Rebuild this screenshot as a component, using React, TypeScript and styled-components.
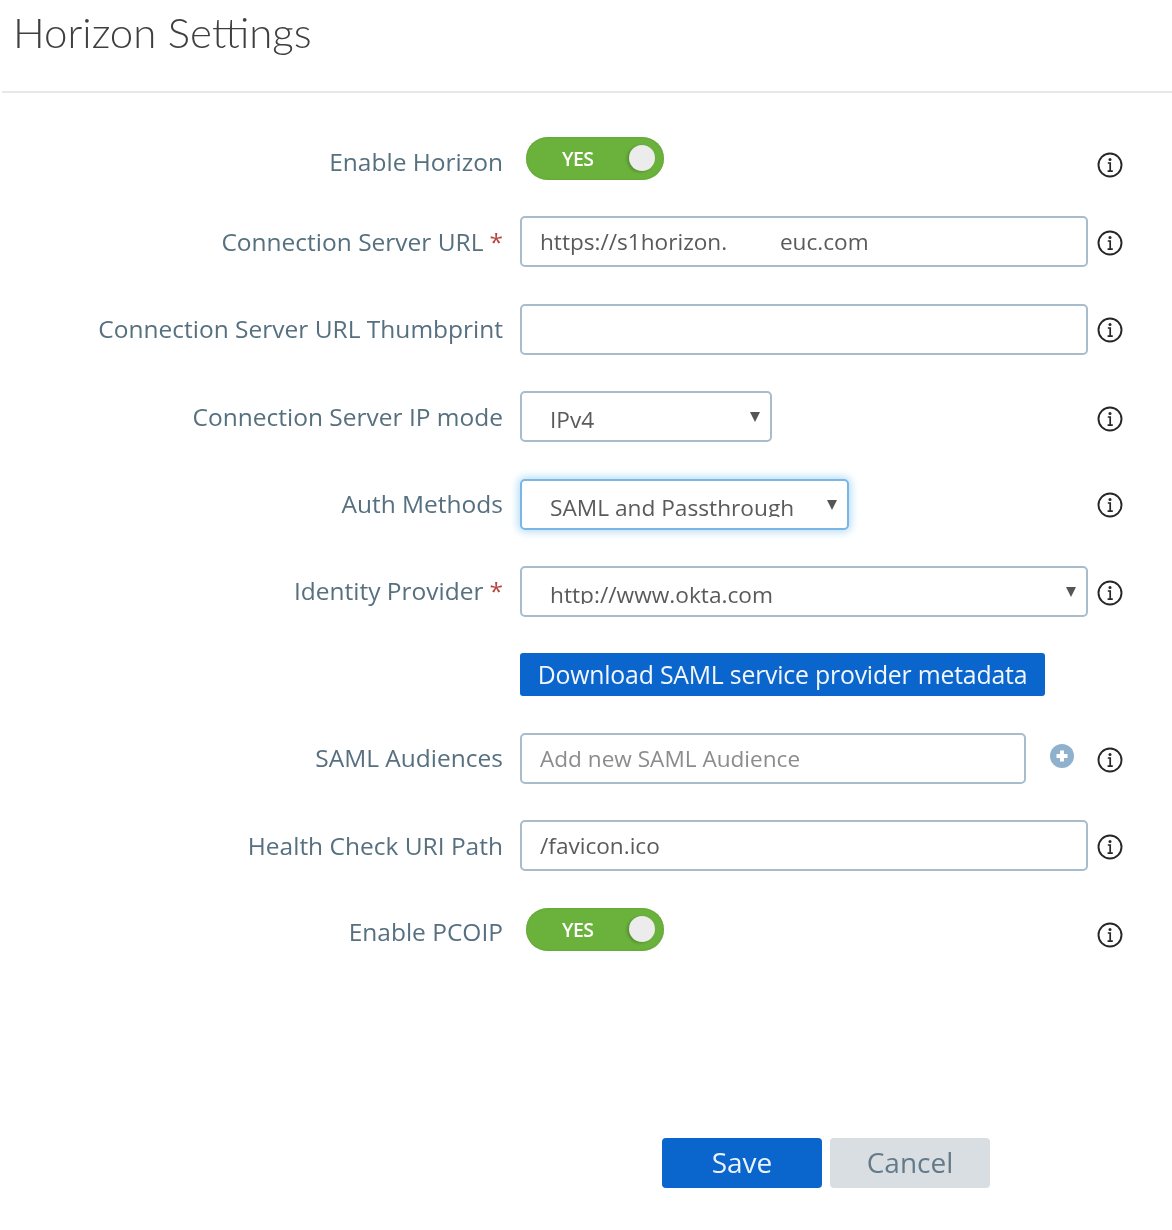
import * as React from "react";
import styled, { createGlobalStyle } from "styled-components";

const GlobalStyle = createGlobalStyle`
  html, body {
    margin: 0;
    padding: 0;
    background: #fff;
    font-family: "Open Sans", "Liberation Sans", sans-serif;
  }
`;

const Page = styled.div`
  width: 1172px;
  height: 1230px;
  overflow: hidden;
  box-sizing: border-box;
  filter: blur(0.5px);
`;

const Header = styled.header`
  height: 93px;
  margin-left: 2px;
  padding: 6px 0 0 11px;
  box-sizing: border-box;
  border-bottom: 2px solid #e8e8e8;
`;

const Title = styled.h1`
  margin: 0;
  font-family: "Lato", sans-serif;
  font-size: 42px;
  line-height: 52px;
  font-weight: 300;
  color: #3f3f3f;
`;

const Form = styled.form`
  display: flex;
  flex-direction: column;
  gap: 36.4px;
  padding-top: 44px;
`;

const Row = styled.div<{ $short?: boolean }>`
  display: grid;
  grid-template-columns: 503px 585px 44px;
  column-gap: 0;
  align-items: center;
  height: ${(p) => (p.$short ? "43px" : "51px")};
`;

const Label = styled.label<{ $drop?: number }>`
  text-align: right;
  font-size: 24.5px;
  line-height: 32px;
  color: #567080;
  white-space: nowrap;
  padding-top: ${(p) => p.$drop ?? 0}px;
`;

const Star = styled.span`
  color: #b5453c;
  margin-left: 6px;
`;

const Field = styled.div`
  display: flex;
  align-items: center;
  padding-left: 17px;
  min-width: 0;
`;

const TextInput = styled.input<{ $width?: number }>`
  width: ${(p) => p.$width ?? 569}px;
  height: 51px;
  box-sizing: border-box;
  padding: 0 18px;
  border: 2px solid #a9bccb;
  border-radius: 5px;
  background: #fff;
  font-family: inherit;
  font-size: 22.6px;
  color: #5a5a5a;
  outline: none;
  &::placeholder {
    color: #8c8c8c;
    opacity: 1;
  }
`;

const SelectBox = styled.div<{ $width: number; $focus?: boolean }>`
  position: relative;
  width: ${(p) => p.$width}px;
  height: 51px;
  box-sizing: border-box;
  padding: 11px 0 0 28px;
  border: 2px solid ${(p) => (p.$focus ? "#79b6e6" : "#a9bccb")};
  border-radius: 5px;
  background: #fff;
  box-shadow: ${(p) => (p.$focus ? "0 0 9px 2px #b5dcf6" : "none")};
`;

const SelectValue = styled.div`
  height: 25px;
  overflow: hidden;
  font-size: 22.7px;
  line-height: 32px;
  color: #5a5a5a;
  white-space: nowrap;
`;

const Caret = styled.span`
  position: absolute;
  top: 19px;
  right: 10px;
  width: 0;
  height: 0;
  border-left: 5px solid transparent;
  border-right: 5px solid transparent;
  border-top: 10px solid #555;
`;

const Toggle = styled.div`
  position: relative;
  width: 138px;
  height: 43px;
  margin-left: 6px;
  border-radius: 22px;
  background: #6ab23c;
  box-shadow: inset 0 0 2px #5a9a30;
`;

const ToggleText = styled.span`
  position: absolute;
  left: 36px;
  top: 9px;
  font-size: 19.5px;
  line-height: 26px;
  letter-spacing: -0.6px;
  font-weight: 600;
  color: #fff;
`;

const Knob = styled.span`
  position: absolute;
  right: 9px;
  top: 8px;
  width: 26px;
  height: 26px;
  border-radius: 50%;
  background: #ececec;
  box-shadow: -2px 1px 3px rgba(0, 0, 0, 0.2);
`;

const IconCell = styled.div<{ $drop?: number }>`
  display: flex;
  justify-content: flex-start;
  padding: ${(p) => p.$drop ?? 2}px 0 0 9px;
`;

const AddButton = styled.span`
  display: flex;
  margin-left: 23px;
  margin-top: -5px;
`;

const DownloadButton = styled.button`
  width: 525px;
  height: 43px;
  padding: 0 0 2px;
  border: 0;
  border-radius: 3px;
  background: #0a65cc;
  color: #f2f7fc;
  font-family: inherit;
  font-size: 24.8px;
  letter-spacing: -0.2px;
  white-space: nowrap;
`;

const Actions = styled.div`
  display: flex;
  gap: 8px;
  margin: 187.4px 0 0 662px;
`;

const ActionButton = styled.button<{ $primary?: boolean }>`
  width: 160px;
  height: 50px;
  padding: 0 0 2px;
  border: 0;
  border-radius: 4px;
  background: ${(p) => (p.$primary ? "#0a65cc" : "#d9dee2")};
  color: ${(p) => (p.$primary ? "#eaf3fc" : "#647a8a")};
  font-family: inherit;
  font-size: 28px;
`;

function InfoIcon() {
  return (
    <svg width="26" height="26" viewBox="0 0 26 26" fill="none">
      <circle cx="13" cy="13" r="11.5" stroke="#262626" strokeWidth="1.9" />
      <circle cx="13" cy="7.6" r="1.5" fill="#262626" />
      <path d="M10.8 11H13.2V18.8M10.6 19.2H15.8" stroke="#262626" strokeWidth="1.7" />
    </svg>
  );
}

function PlusIcon() {
  return (
    <svg width="26" height="26" viewBox="0 0 26 26">
      <circle cx="13" cy="13" r="12" fill="#8fb1cd" />
      <path d="M13 7.5V18.5M7.5 13H18.5" stroke="#fff" strokeWidth="4" />
    </svg>
  );
}

function Switch() {
  return (
    <Toggle>
      <ToggleText>YES</ToggleText>
      <Knob />
    </Toggle>
  );
}

function Select({ value, width, focus }: { value: string; width: number; focus?: boolean }) {
  return (
    <SelectBox $width={width} $focus={focus}>
      <SelectValue>{value}</SelectValue>
      <Caret />
    </SelectBox>
  );
}

export default function App() {
  return (
    <Page>
      <GlobalStyle />
      <Header>
        <Title>Horizon Settings</Title>
      </Header>
      <Form>
        <Row $short>
          <Label $drop={6}>Enable Horizon</Label>
          <Field>
            <Switch />
          </Field>
          <IconCell $drop={12}>
            <InfoIcon />
          </IconCell>
        </Row>
        <Row>
          <Label>
            Connection Server URL<Star>*</Star>
          </Label>
          <Field>
            <TextInput defaultValue="https://s1horizon.         euc.com" />
          </Field>
          <IconCell>
            <InfoIcon />
          </IconCell>
        </Row>
        <Row>
          <Label>Connection Server URL Thumbprint</Label>
          <Field>
            <TextInput />
          </Field>
          <IconCell>
            <InfoIcon />
          </IconCell>
        </Row>
        <Row>
          <Label>Connection Server IP mode</Label>
          <Field>
            <Select value="IPv4" width={252} />
          </Field>
          <IconCell $drop={4}>
            <InfoIcon />
          </IconCell>
        </Row>
        <Row>
          <Label>Auth Methods</Label>
          <Field>
            <Select value="SAML and Passthrough" width={329} focus />
          </Field>
          <IconCell>
            <InfoIcon />
          </IconCell>
        </Row>
        <Row>
          <Label>
            Identity Provider<Star>*</Star>
          </Label>
          <Field>
            <Select value="http://www.okta.com" width={569} />
          </Field>
          <IconCell $drop={4}>
            <InfoIcon />
          </IconCell>
        </Row>
        <Row $short>
          <span />
          <Field>
            <DownloadButton type="button">Download SAML service provider metadata</DownloadButton>
          </Field>
          <span />
        </Row>
        <Row>
          <Label>SAML Audiences</Label>
          <Field>
            <TextInput $width={506} placeholder="Add new SAML Audience" />
            <AddButton>
              <PlusIcon />
            </AddButton>
          </Field>
          <IconCell $drop={3}>
            <InfoIcon />
          </IconCell>
        </Row>
        <Row>
          <Label>Health Check URI Path</Label>
          <Field>
            <TextInput defaultValue="/favicon.ico" />
          </Field>
          <IconCell>
            <InfoIcon />
          </IconCell>
        </Row>
        <Row $short>
          <Label $drop={6}>Enable PCOIP</Label>
          <Field>
            <Switch />
          </Field>
          <IconCell $drop={12}>
            <InfoIcon />
          </IconCell>
        </Row>
      </Form>
      <Actions>
        <ActionButton type="button" $primary>
          Save
        </ActionButton>
        <ActionButton type="button">Cancel</ActionButton>
      </Actions>
    </Page>
  );
}
